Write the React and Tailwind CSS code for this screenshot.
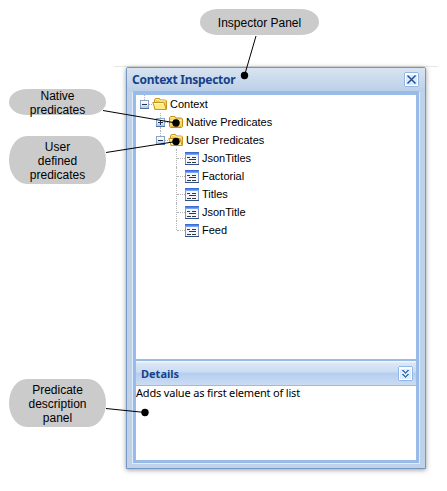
import React from 'react';

function Toggle({ open }) {
  return (
    <svg width="9" height="9" viewBox="0 0 9 9" className="block shrink-0" shapeRendering="crispEdges">
      <defs>
        <linearGradient id="toggleFill" x1="0" y1="0" x2="0" y2="1">
          <stop offset="0" stopColor="#ffffff" />
          <stop offset="0.5" stopColor="#e9eff8" />
          <stop offset="1" stopColor="#a9bedd" />
        </linearGradient>
      </defs>
      <rect x="0.5" y="0.5" width="8" height="8" fill="url(#toggleFill)" stroke="#8da3c2" />
      <path d="M0 8h9v1H0z" fill="#4f70a3" />
      <path d="M2 4h5v1H2z" fill="#1d3357" />
      {!open && <path d="M4 2h1v5H4z" fill="#1d3357" />}
    </svg>
  );
}

function Folder() {
  return (
    <svg width="16" height="14" viewBox="0 0 16 14" className="block shrink-0">
      <path d="M2.5 12V3L3.5 1.5H7.5L8.5 3H13.5L14.5 4V12z" fill="#f3d05c" stroke="#c8961e" />
      <path d="M3.5 3.5L4 2.5H7L8 4H13.5" fill="none" stroke="#fff3b0" />
      <path d="M.8 5.5H11.8L14.3 12.5H3.2z" fill="#fdec8c" stroke="#c8961e" />
      <path d="M2 6.5H11.3" stroke="#fffbd5" />
    </svg>
  );
}

function ClosedFolder() {
  return (
    <svg width="16" height="14" viewBox="0 0 16 14" className="block shrink-0">
      <path d="M1.5 11.5V2.5L2.5 1.5H7L8 3H13.5L14.5 4V11.5L13.5 12.5H2.5z" fill="#f7d867" stroke="#c0901c" />
      <path d="M2.5 5.5H13.5" stroke="#fff5aa" />
      <path d="M3 2.5H6.5" stroke="#fff0a0" />
      <path d="M2.5 11.5H13.5" stroke="#e9b93c" />
    </svg>
  );
}

function FormIcon() {
  return (
    <svg width="14" height="13" viewBox="0 0 14 13" className="block shrink-0" shapeRendering="crispEdges">
      <rect x="0.5" y="0.5" width="13" height="12" fill="#f5f6fa" stroke="#8494b8" />
      <path d="M0 0h14v1H0z" fill="#3d6bd2" />
      <path d="M0 1h14v1H0z" fill="#4f84ec" />
      <path d="M0 2h14v1H0z" fill="#77a5f6" />
      <path d="M0 12h14v1H0z" fill="#2f4f91" />
      <path d="M2 5h3v1H2zM7 5h4v1H7zM4 7h7v1H4zM2 10h4v1H2zM7 10h4v1H7z" fill="#343a42" />
    </svg>
  );
}

function ToolButton({ children }) {
  return (
    <svg width="15" height="15" viewBox="0 0 15 15" className="block shrink-0" shapeRendering="crispEdges">
      <rect x="0.5" y="0.5" width="14" height="14" rx="2" fill="#fff" stroke="#91b6e8" />
      <rect x="2" y="3" width="11" height="10" fill="#dcecfc" />
      {children}
    </svg>
  );
}

function Connector() {
  return <span className="w-[3px] border-t border-dotted border-[#b4b4b4]" />;
}

function Stem() {
  return <span className="flex-1 border-l border-dotted border-[#b4b4b4]" />;
}

function ToggleCell({ open, below }) {
  return (
    <span className="flex h-[18px] w-[9px] flex-col">
      <span className="flex h-[5px] pl-1"><Stem /></span>
      <Toggle open={open} />
      {below && <span className="flex h-[4px] pl-1"><Stem /></span>}
    </span>
  );
}

function Leaf({ label, last }) {
  return (
    <li className="flex h-[18px] items-center pl-[40px]">
      <span className={last ? 'h-[9px] self-start border-l border-dotted border-[#b4b4b4]' : 'h-[18px] border-l border-dotted border-[#b4b4b4]'} />
      <span className="w-2 border-t border-dotted border-[#b4b4b4]" />
      <FormIcon />
      <span className="pl-[3px]">{label}</span>
    </li>
  );
}

function Callout({ className, lines }) {
  return (
    <div className={`absolute flex flex-col items-center justify-center bg-[#cbcbcb] pt-px text-[12px] leading-[14px] ${className}`}>
      {lines.map((line) => <span key={line} className="whitespace-nowrap">{line}</span>)}
    </div>
  );
}

export default function App() {
  return (
    <div className="relative h-[491px] w-[447px] overflow-hidden bg-white pt-[66px] font-['Liberation_Sans',Arial,sans-serif] text-black">
      <div className="ml-[114px] h-px w-[324px] bg-[#e6e6e6]" />
      <section className="ml-[126px] flex h-[402px] w-[300px] flex-col rounded-t-[2px] border border-[#7396c3] bg-[#bfd2e9] px-[5px] pb-1 shadow-[0_1px_5px_rgba(0,0,0,0.4)]">
        <header className="-mx-[5px] flex h-[23px] shrink-0 items-center justify-between bg-linear-to-b from-[#d8e4f0] to-[#bdd0e9] pl-[5px] pr-[6px]">
          <h1 className="whitespace-nowrap font-['Noto_Sans',sans-serif] text-[12px] font-bold leading-4 tracking-[-0.27px] text-[#15428b]">Context Inspector</h1>
          <ToolButton>
            <path d="M3.500 3.500L11.500 11.500M11.500 3.500L3.500 11.500" stroke="#234b97" strokeWidth="1.500" shapeRendering="geometricPrecision" />
          </ToolButton>
        </header>
        <div className="flex min-h-0 flex-1 flex-col border border-[#dfeafa] border-t-[#99bbe8]">
          <div className="flex min-h-0 flex-1 flex-col border-[3px] border-[#99bbe8]">
            <ul className="h-[264px] shrink-0 bg-white text-[11px] leading-[18px]">
              <li className="flex h-[18px] items-center pl-[4px]">
                <ToggleCell open />
                <Connector />
                <Folder />
                <span className="pl-[2px]">Context</span>
              </li>
              <li className="flex h-[18px] items-center pl-[20px]">
                <ToggleCell below />
                <Connector />
                <ClosedFolder />
                <span className="pl-[2px]">Native Predicates</span>
              </li>
              <li className="flex h-[18px] items-center pl-[20px]">
                <ToggleCell open />
                <Connector />
                <Folder />
                <span className="pl-[2px]">User Predicates</span>
              </li>
              <Leaf label="JsonTitles" />
              <Leaf label="Factorial" />
              <Leaf label="Titles" />
              <Leaf label="JsonTitle" />
              <Leaf label="Feed" last />
            </ul>
            <header className="flex h-[27px] shrink-0 items-center justify-between border-b border-t-2 border-[#99bbe8] bg-[linear-gradient(#f0f6fd_0px,#f0f6fd_1px,#dae7f6_2px,#cbddf3_11px,#b5ceef_12px,#cbdcf3_24px)] pl-[5px] pr-[3px]">
              <h2 className="pt-px font-['Noto_Sans',sans-serif] text-[11px] font-bold leading-4 text-[#15428b]">Details</h2>
              <ToolButton>
                <path d="M4 4h2v1h1v1h1V5h1V4h2v1h-1v1H9v1H8v1H7V7H6V6H5V5H4zM4 8h2v1h1v1h1V9h1V8h2v1h-1v1H9v1H8v1H7v-1H6v-1H5V9H4z" fill="#4378b5" />
              </ToolButton>
            </header>
            <div className="flex-1 bg-white">
              <p className="whitespace-nowrap font-['Noto_Sans','Open_Sans',sans-serif] text-[11px] leading-[14px] tracking-[-0.18px]">Adds value as first element of list</p>
            </div>
          </div>
        </div>
      </section>

      <Callout className="left-[200px] top-[9px] h-[26px] w-[119px] rounded-[18px/13px]" lines={['Inspector Panel']} />
      <Callout className="left-[9px] top-[89px] h-[26px] w-[97px] rounded-[18px/13px]" lines={['Native', 'predicates']} />
      <Callout className="left-[9px] top-[136px] h-[48px] w-[97px] rounded-[18px/24px]" lines={['User', 'defined', 'predicates']} />
      <Callout className="left-[9px] top-[379px] h-[48px] w-[97px] rounded-[18px/24px]" lines={['Predicate', 'description', 'panel']} />
      <svg width="447" height="491" viewBox="0 0 447 491" className="pointer-events-none absolute left-0 top-0">
        <path d="M256 36L244.5 75.5M103 110.5L176 123M106 152.5L176 141.5M106 408.5L145 412.5" stroke="#000" />
        <circle cx="244.5" cy="75.5" r="3.7" />
        <circle cx="176" cy="123" r="3.7" />
        <circle cx="176" cy="141.5" r="3.7" />
        <circle cx="145" cy="412.5" r="3.7" />
      </svg>
    </div>
  );
}
